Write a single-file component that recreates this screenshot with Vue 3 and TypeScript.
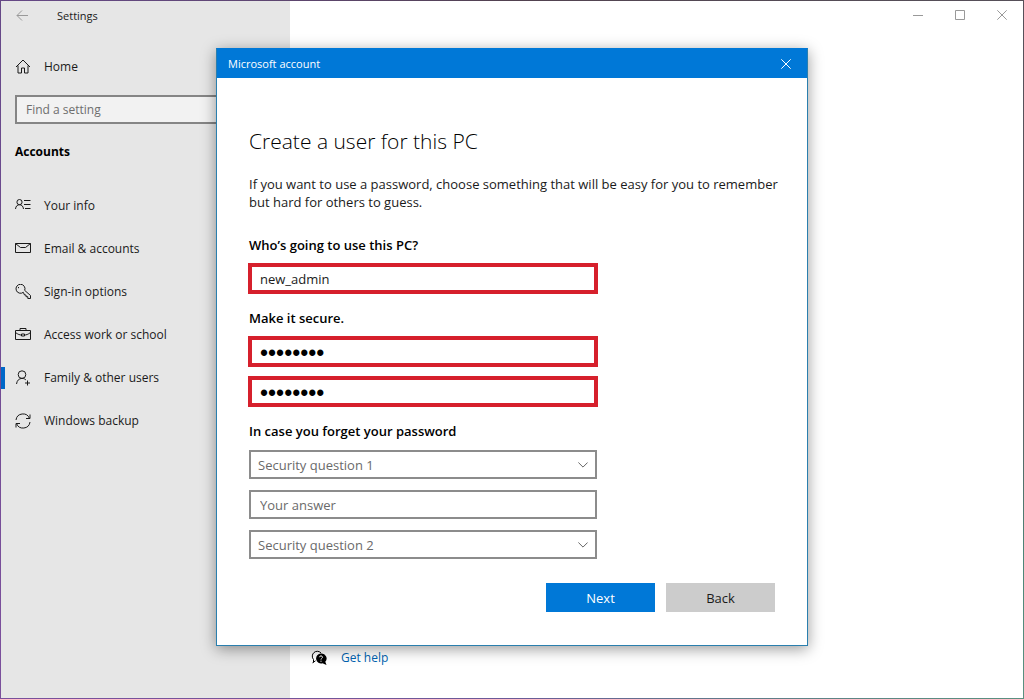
<script setup lang="ts">
import { ref } from 'vue'

interface NavItem {
  id: string
  label: string
  paths: string[]
}

const navItems: NavItem[] = [
  {
    id: 'info',
    label: 'Your info',
    paths: [
      'M4.5 1.5a2.6 2.6 0 1 1 0 5.2a2.6 2.6 0 1 1 0-5.2z',
      'M.5 11C.8 8.200 2.300 6.700 4.500 6.700S8.200 8.200 8.500 11',
      'M9 2.500h6.500M9 6.500h6.500M10 10.500h5.500',
    ],
  },
  { id: 'email', label: 'Email & accounts', paths: ['M.5 2.500h15v9H.5z', 'M.5 2.500L5.500 6.500H10.500L15.500 2.500'] },
  {
    id: 'signin',
    label: 'Sign-in options',
    paths: [
      'M8.300 8.300A4.500 4.500 0 1 1 9.700 6.400L15.500 11.500V14.500H12.800V12.700H11V11H9.500z',
      'M3.500 3v1.200',
    ],
  },
  {
    id: 'work',
    label: 'Access work or school',
    paths: ['M.5 3.500h15v9H.5z', 'M5 3.500V1.500h6v2', 'M.5 5.500C3 7.500 5 8 6.500 8M9.500 8C11 8 13 7.500 15.500 5.500', 'M6.500 7h3v2h-3z'],
  },
  {
    id: 'family',
    label: 'Family & other users',
    paths: [
      'M7 .8a3.800 3.800 0 1 1 0 7.600a3.800 3.800 0 1 1 0-7.600z',
      'M1.500 14C2 10.500 4 8.400 7 8.400C8.800 8.400 10 9 11 10.100',
      'M12.500 10.500v5M10 13h5',
    ],
  },
  {
    id: 'backup',
    label: 'Windows backup',
    paths: ['M1 7A7 7 0 0 1 14.500 5.500M15 1.500V5.500H11', 'M15 9A7 7 0 0 1 1.500 10.500M1 14.500V10.500H5'],
  },
]

const selected = ref('family')
const search = ref('')
const userName = ref('new_admin')
const password = ref('password')
const confirmation = ref('password')
const question1 = ref('')
const answer1 = ref('')
const question2 = ref('')
</script>

<template>
  <div class="window">
    <aside class="sidebar">
      <header class="titlebar">
        <button class="icon-button" type="button" aria-label="Go back">
          <svg class="icon back" viewBox="0 0 14 14"><path d="M13 6.500H2M7 1.500L2 6.500L7 11.500" /></svg>
        </button>
        <span class="app-name">Settings</span>
      </header>
      <a class="home" href="#">
        <svg class="icon" viewBox="0 0 16 16"><path d="M1 8L8 1L15 8M3 6.500V14H6.500V9H9.500V14H13V6.500" /></svg>
        <span>Home</span>
      </a>
      <input v-model="search" class="search" type="text" placeholder="Find a setting" aria-label="Find a setting" />
      <h2 class="section">Accounts</h2>
      <nav class="nav">
        <a
          v-for="item in navItems"
          :key="item.id"
          class="nav-item"
          :class="{ active: item.id === selected }"
          href="#"
          @click.prevent="selected = item.id"
        >
          <svg class="icon" viewBox="0 0 16 16"><path v-for="d in item.paths" :key="d" :d="d" /></svg>
          <span>{{ item.label }}</span>
        </a>
      </nav>
    </aside>

    <main class="content">
      <div class="caption-buttons">
        <button class="icon-button" type="button" aria-label="Minimize">
          <svg class="caption-icon" viewBox="0 0 10 10"><path d="M0 5.500H10" /></svg>
        </button>
        <button class="icon-button" type="button" aria-label="Maximize">
          <svg class="caption-icon" viewBox="0 0 10 10"><path d="M.5 .5h9v9h-9z" /></svg>
        </button>
        <button class="icon-button" type="button" aria-label="Close window">
          <svg class="caption-icon" viewBox="0 0 10 10"><path d="M.3 .3L9.700 9.700M9.700 .3L.3 9.700" /></svg>
        </button>
      </div>
      <a class="help" href="#">
        <svg class="help-icon" viewBox="0 0 16 16">
          <path class="bubble-back" d="M2.500 12.500V9.500A4.700 4.700 0 1 1 10 3" />
          <path class="bubble-back" d="M1.500 12.800L4.500 10.800" />
          <path class="bubble-front" d="M10 3.500a5 5 0 1 0 1.500 9.800L15.500 15L14.300 11.800A5 5 0 0 0 10 3.500z" />
          <path class="mark" d="M8.500 7.200C8.500 5.400 11.500 5.400 11.500 7.200C11.500 8.300 10 8.300 10 9.600M10 10.700V11.800" />
        </svg>
        <span>Get help</span>
      </a>
    </main>

    <div class="overlay">
      <section class="dialog" role="dialog" aria-labelledby="dialog-title">
        <header class="dialog-bar">
          <span>Microsoft account</span>
          <button class="icon-button" type="button" aria-label="Close">
            <svg class="caption-icon" viewBox="0 0 10 10"><path d="M.3 .3L9.700 9.700M9.700 .3L.3 9.700" /></svg>
          </button>
        </header>
        <form class="form" @submit.prevent>
          <h1 id="dialog-title">Create a user for this PC</h1>
          <p>
            If you want to use a password, choose something that will be easy for you to remember but hard for others to
            guess.
          </p>

          <div class="group">
            <label for="user">Who’s going to use this PC?</label>
            <input id="user" v-model="userName" class="field marked" type="text" />
          </div>
          <div class="group">
            <label for="pass">Make it secure.</label>
            <div class="stack">
              <input id="pass" v-model="password" class="field marked secret" type="password" />
              <input v-model="confirmation" class="field marked secret" type="password" aria-label="Confirm password" />
            </div>
          </div>
          <div class="group">
            <label for="question1">In case you forget your password</label>
            <div class="stack">
              <div class="select">
                <select id="question1" v-model="question1" class="field">
                  <option value="">Security question 1</option>
                </select>
                <svg class="chevron" viewBox="0 0 10 6"><path d="M.4 .5L5 5.100L9.600 .5" /></svg>
              </div>
              <input v-model="answer1" class="field" type="text" placeholder="Your answer" aria-label="Your answer" />
              <div class="select">
                <select v-model="question2" class="field" aria-label="Security question 2">
                  <option value="">Security question 2</option>
                </select>
                <svg class="chevron" viewBox="0 0 10 6"><path d="M.4 .5L5 5.100L9.600 .5" /></svg>
              </div>
            </div>
          </div>

          <footer class="actions">
            <button class="action primary" type="submit">Next</button>
            <button class="action" type="button">Back</button>
          </footer>
        </form>
      </section>
    </div>
  </div>
</template>

<style>
body {
  margin: 0;
}
</style>

<style scoped>
* {
  box-sizing: border-box;
}

.window {
  position: relative;
  display: flex;
  min-height: 100vh;
  border: 1px solid transparent;
  background:
    linear-gradient(#fff, #fff) padding-box,
    conic-gradient(
        #51414f,
        #5a5a60 95deg,
        #4d8577 112deg,
        #5a9080 124deg,
        #6a5a98 180deg,
        #7b4f9c 240deg,
        #67498a 300deg,
        #51414f
      )
      border-box;
  color: #1a1a1a;
  font: 13px/20px "Open Sans", "Noto Sans", sans-serif;
}

.sidebar {
  flex: 0 0 289px;
  background: #e6e6e6;
  font-size: 12px;
}

a {
  color: inherit;
  text-decoration: none;
}

button {
  font: inherit;
  border: 0;
  padding: 0;
}

svg {
  display: block;
  fill: none;
  stroke: currentColor;
}

.icon {
  width: 16px;
  height: 16px;
  flex: none;
}

.icon-button {
  display: grid;
  place-items: center;
  background: none;
  color: inherit;
}

.titlebar {
  display: flex;
  align-items: center;
  gap: 28px;
  height: 30px;
  padding-left: 14px;
  font-size: 11px;
}

.titlebar .icon {
  width: 14px;
  height: 14px;
  color: #999;
}

.home {
  display: flex;
  align-items: center;
  gap: 13px;
  height: 40px;
  margin-top: 16px;
  padding-left: 14px;
}

.search {
  display: block;
  width: calc(100% - 28px);
  height: 29px;
  margin: 8px 14px 0;
  padding: 0 9px;
  border: 2px solid #858585;
  border-radius: 0;
  background: #f2f2f2;
  font: inherit;
}

.search::placeholder {
  color: #6e6e6e;
  opacity: 1;
}

.section {
  margin: 18px 14px 0;
  font-size: 12px;
  line-height: 20px;
  font-weight: 700;
  color: #000;
}

.nav {
  margin-top: 22px;
}

.nav-item {
  display: flex;
  align-items: center;
  gap: 13px;
  height: 43px;
  padding-left: 14px;
}

.nav-item.active {
  background: linear-gradient(#0067c8, #0067c8) left center / 4px 22px no-repeat;
}

.content {
  flex: 1;
  display: flex;
  flex-direction: column;
  justify-content: space-between;
  align-items: flex-start;
}

.caption-buttons {
  display: flex;
  align-self: flex-end;
  height: 28px;
  color: #999;
}

.caption-buttons .icon-button {
  width: 42px;
}

.caption-icon {
  width: 10px;
  height: 10px;
}

.help {
  display: flex;
  align-items: center;
  gap: 14px;
  margin: 0 0 30px 21px;
  color: #0063b1;
  font-size: 12px;
}

.help-icon {
  width: 16px;
  height: 16px;
  color: #000;
}

.bubble-front {
  fill: #000;
  stroke: none;
}

.mark {
  stroke: #fff;
}

.overlay {
  position: absolute;
  inset: 0;
  display: flex;
  justify-content: center;
  align-items: flex-start;
  padding: 47px 0;
}

.dialog {
  width: 592px;
  max-width: 100%;
  border: 1px solid #2a7fae;
  border-top-color: #0078d7;
  background: #fff;
  box-shadow: 0 3px 14px rgba(0, 0, 0, 0.4);
}

.dialog-bar {
  display: flex;
  justify-content: space-between;
  align-items: center;
  height: 29px;
  padding: 0 16px 0 11px;
  background: #0078d7;
  color: #fff;
  font-size: 11px;
}

.form {
  padding: 48px 20px 33px 32px;
}

h1 {
  margin: 0 0 19px;
  color: #000;
  font-size: 21px;
  line-height: 30px;
  font-weight: 300;
}

p {
  margin: 0 0 24px;
  line-height: 18px;
}

.group {
  display: grid;
  gap: 9px;
  width: 348px;
  max-width: 100%;
  margin-bottom: 15px;
}

.group label {
  color: #000;
  font-weight: 600;
}

.stack {
  display: grid;
  gap: 11px;
}

.field {
  display: block;
  width: 100%;
  height: 29px;
  margin: 0;
  padding: 0 9px;
  border: 2px solid #8c8c8c;
  border-radius: 0;
  background: #fff;
  color: #1a1a1a;
  font: inherit;
}

.field::placeholder {
  color: #6a6a6a;
  opacity: 1;
}

.marked {
  padding: 0 8px;
  border: 3px solid #d6202c;
  outline: 1px solid #d6202c;
}

.secret {
  padding-top: 4px;
  color: #000;
  font: 23px/19px "Liberation Sans", sans-serif;
}

.select {
  display: grid;
  align-items: center;
}

.select > * {
  grid-area: 1 / 1;
}

select.field {
  appearance: none;
  padding: 0 7px;
  color: #6a6a6a;
}

.chevron {
  justify-self: end;
  width: 10px;
  height: 6px;
  margin-right: 9px;
  color: #666;
  pointer-events: none;
}

.actions {
  display: flex;
  justify-content: flex-end;
  gap: 11px;
  margin-top: 24px;
  padding-right: 12px;
}

.action {
  width: 109px;
  height: 29px;
  background: #ccc;
  color: #1a1a1a;
}

.primary {
  background: #0078d7;
  color: #fff;
}
</style>
